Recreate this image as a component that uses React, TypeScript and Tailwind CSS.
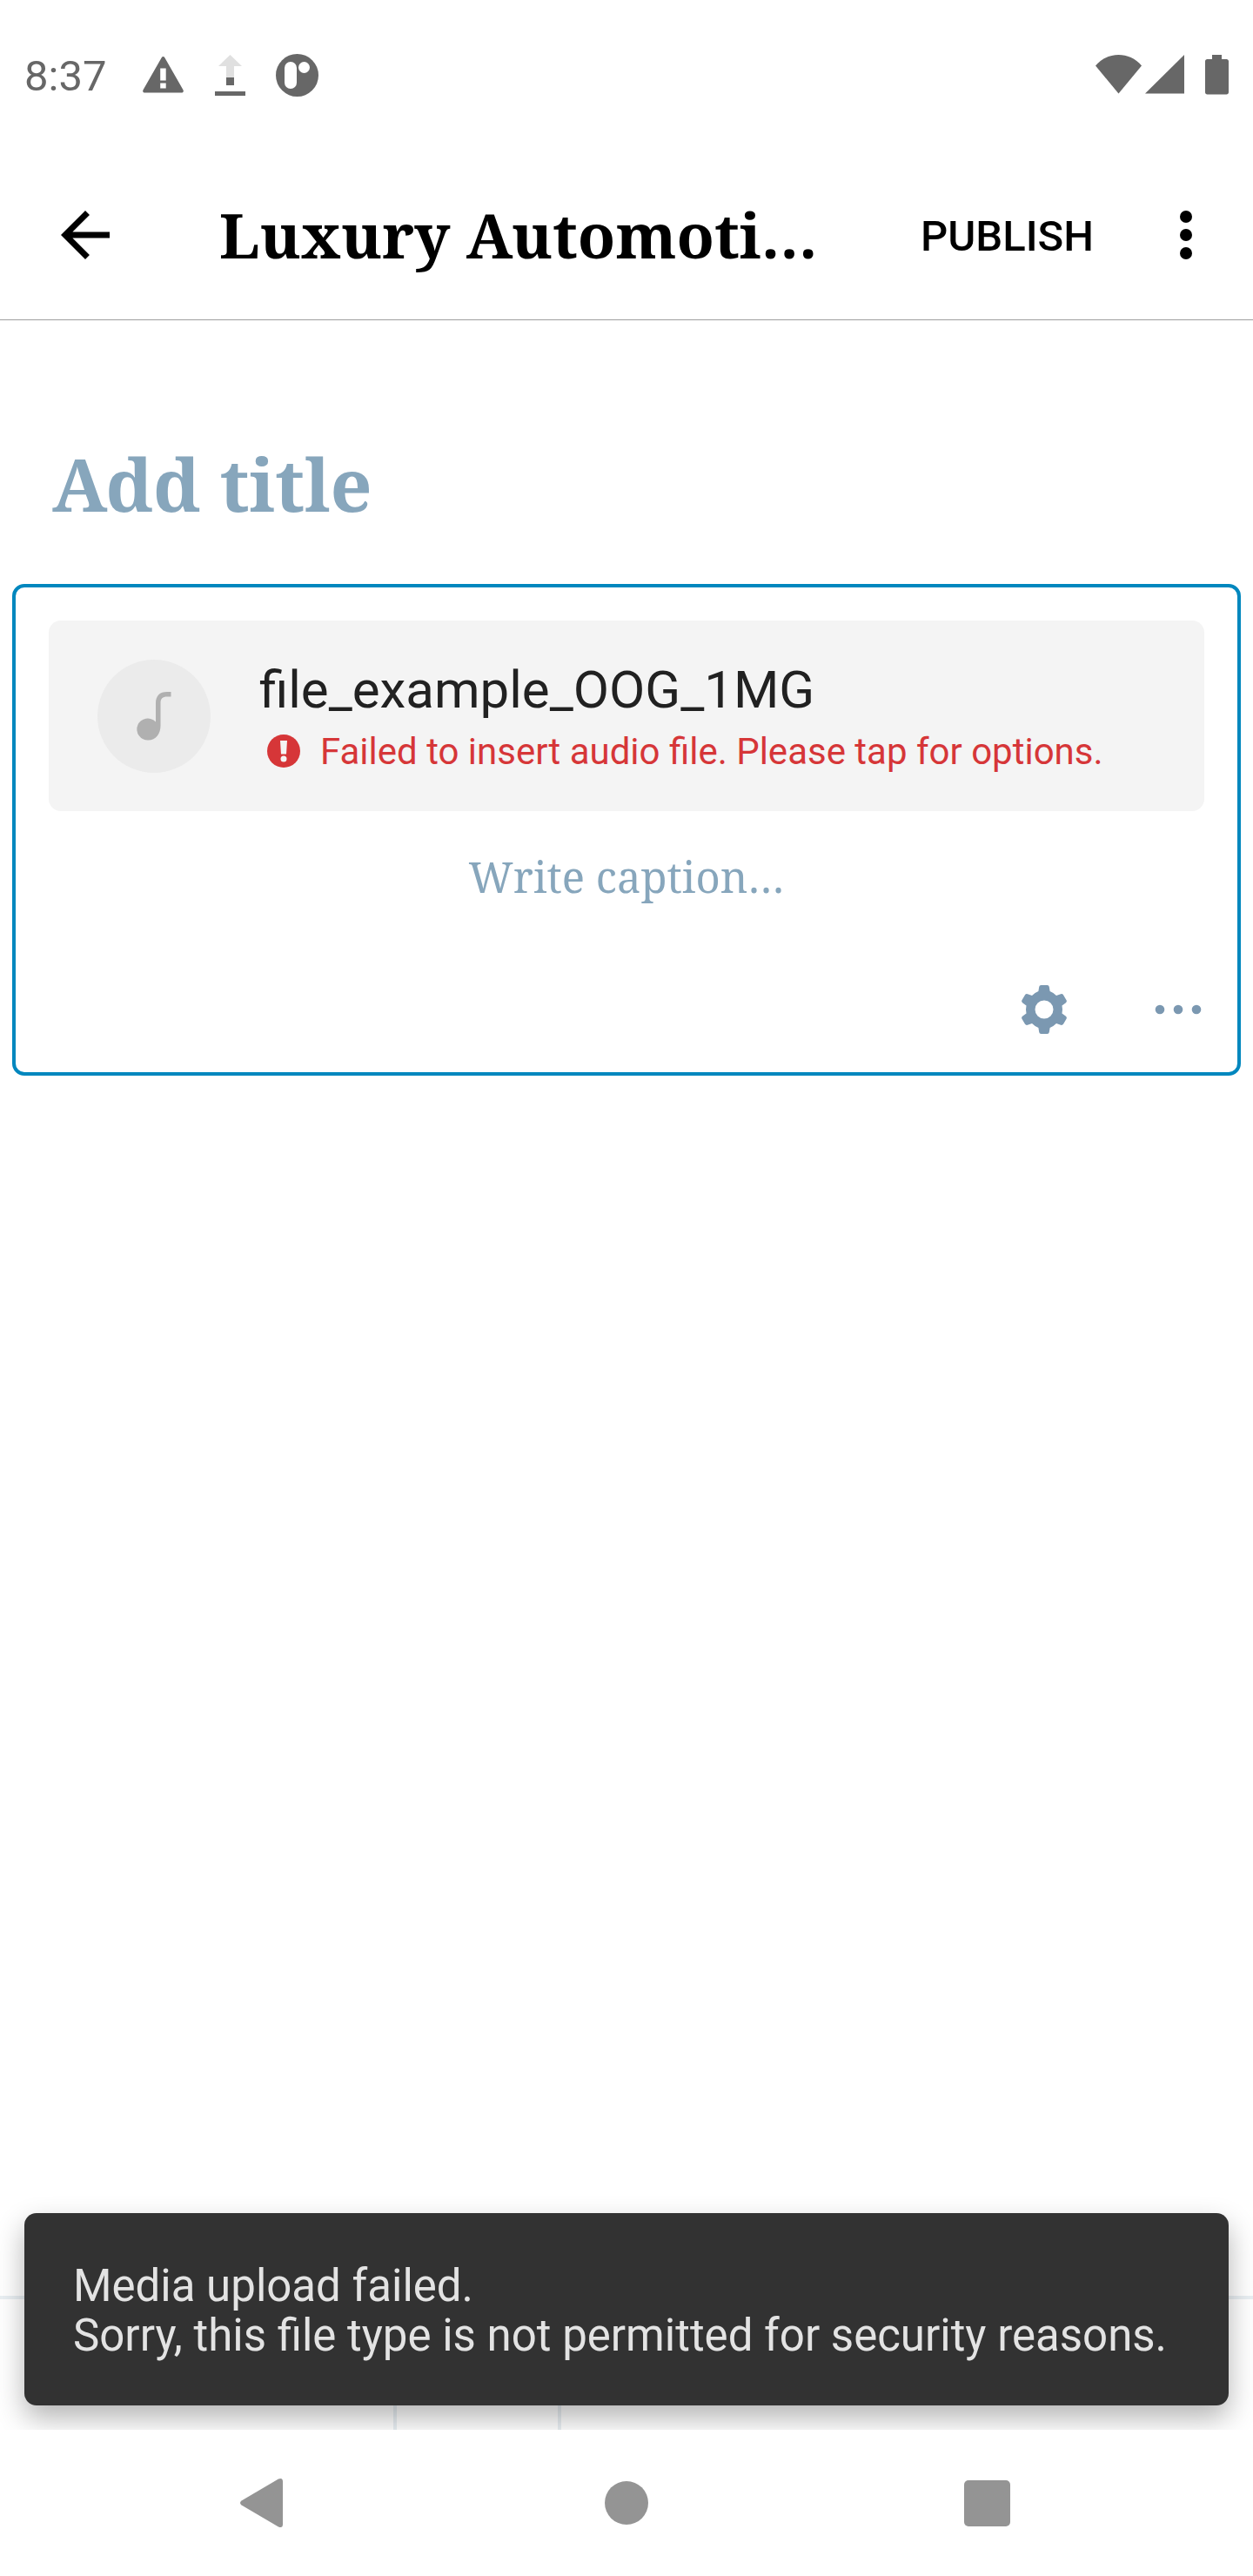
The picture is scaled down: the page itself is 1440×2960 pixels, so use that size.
import React from "react";

const serif = "font-['Noto_Serif','DejaVu_Serif_Condensed','DejaVu_Serif',serif]";

function StatusBar() {
  return (
    <div className="flex h-[172px] shrink-0 items-center justify-between px-7 text-[#676767]">
      <div className="flex items-center">
        <span className="pt-1 text-[49px] leading-[58px]">8:37</span>
        <svg className="ml-[41px] h-[49px] w-[49px]" viewBox="0 0 49 49" fill="currentColor" aria-hidden="true">
          <path
            fillRule="evenodd"
            d="M22.700 4.200c.8-1.500 2.800-1.500 3.600 0L47.600 41.500c.6 1.500 0 3-1.500 3H2.900c-1.500 0-2.100-1.500-1.500-3ZM21.200 16.500v14h6.500v-14ZM21.200 33.500v6h6.500v-6Z"
          />
        </svg>
        <svg className="ml-[35px] h-[49px] w-[35px]" viewBox="0 0 35 49" fill="currentColor" aria-hidden="true">
          <path d="M17.500 1 31 14h-9v13h-9V14H4Z" fill="#e0e0e0" />
          <path d="M13 27h9v9h-9ZM0 43h35v5H0Z" />
        </svg>
        <svg className="ml-[35px] h-[49px] w-[49px]" viewBox="0 0 49 49" aria-hidden="true">
          <circle cx="24.500" cy="24.500" r="24.500" fill="currentColor" />
          <rect x="10" y="9" width="14" height="31" rx="7" fill="#fff" />
          <circle cx="32.500" cy="15.500" r="6.500" fill="#fff" />
        </svg>
      </div>
      <div className="flex items-center">
        <svg className="h-[46px] w-[53px]" viewBox="0 0 53 46" fill="currentColor" aria-hidden="true">
          <path d="M26.500 44.500 0 12.500C7 4 17 0 26.500 0S46 4 53 12.500Z" />
        </svg>
        <svg className="ml-1 h-[46px] w-[45px]" viewBox="0 0 45 46" fill="currentColor" aria-hidden="true">
          <path d="M45 0v44.500H0Z" />
        </svg>
        <svg className="ml-6 h-[46px] w-[27px]" viewBox="0 0 27 46" fill="currentColor" aria-hidden="true">
          <path d="M8 0h11v5h5.500c1.500 0 2.500 1 2.500 2.500v35.500c0 1.500-1 2.500-2.500 2.500h-22C1 45.500 0 44.500 0 43V7.500C0 6 1 5 2.500 5H8Z" />
        </svg>
      </div>
    </div>
  );
}

function AppBar() {
  return (
    <header className="flex h-[196px] shrink-0 items-center border-b border-[#9e9e9e] pl-14 pr-[35px] text-black">
      <button type="button" aria-label="Back" className="h-[84px] w-[84px] shrink-0">
        <svg className="h-full w-full" viewBox="0 0 24 24" fill="currentColor" aria-hidden="true">
          <path d="M20 11H7.830l5.590-5.590L12 4l-8 8 8 8 1.410-1.410L7.830 13H20v-2z" />
        </svg>
      </button>
      <h1 className={`ml-28 min-w-0 flex-1 whitespace-nowrap text-[71px] font-bold leading-[96px] ${serif}`}>
        Luxury Automoti…
      </h1>
      <button type="button" className="shrink-0 pt-1 text-[49px] font-medium leading-[58px]">
        PUBLISH
      </button>
      <button type="button" aria-label="More options" className="ml-16 h-[84px] w-[84px] shrink-0">
        <svg className="h-full w-full" viewBox="0 0 24 24" fill="currentColor" aria-hidden="true">
          <circle cx="12" cy="6" r="2" />
          <circle cx="12" cy="12" r="2" />
          <circle cx="12" cy="18" r="2" />
        </svg>
      </button>
    </header>
  );
}

function AudioBlock() {
  return (
    <section className="mx-3.5 flex flex-col rounded-[14px] border-4 border-[#0087be] px-[38px] pt-[38px] pb-[30px]">
      <button type="button" className="flex h-[219px] items-center rounded-[14px] bg-[#f4f4f4] px-14 text-left">
        <span className="flex h-[130px] w-[130px] shrink-0 items-center justify-center rounded-full bg-[#ebebeb]">
          <svg className="h-[56px] w-[40px]" viewBox="0 0 40 56" fill="#b0b0b0" aria-hidden="true">
            <path d="M39.500 0v5.500H35c-5 0-7.500 2.500-7.500 7V39c0 9-5.500 16.500-14 16.500A12.500 12.500 0 1 1 22 34.500V13C22 4.500 26.500 0 35 0Z" />
          </svg>
        </span>
        <span className="ml-14 flex min-w-0 flex-1 flex-col pt-1">
          <span className="text-[60px] leading-[78px] text-[#212121]">file_example_OOG_1MG</span>
          <span className="flex items-center gap-[22px] pl-2 text-[42px] leading-[64px] text-[#d63638]">
            <svg className="h-[40px] w-[40px] shrink-0" viewBox="0 0 40 40" aria-hidden="true">
              <circle cx="20" cy="19" r="19" fill="currentColor" />
              <path d="M16 7h8l-1 15.500h-6Z" fill="#f4f4f4" />
              <circle cx="20" cy="28" r="3.500" fill="#f4f4f4" />
            </svg>
            <span>Failed to insert audio file. Please tap for options.</span>
          </span>
        </span>
      </button>
      <input
        type="text"
        aria-label="Audio caption"
        placeholder="Write caption…"
        className={`mt-[41px] h-[68px] w-full bg-transparent text-center text-[49px] leading-[68px] text-[#2e4453] outline-none placeholder:text-[#87a6bc] placeholder:opacity-100 ${serif}`}
      />
      <div className="mt-[77px] flex justify-end gap-[70px] text-[#7b98b1]">
        <button type="button" aria-label="Block settings" className="h-[84px] w-[84px]">
          <svg className="h-full w-full" viewBox="0 0 84 84" fill="currentColor" aria-hidden="true">
            <path
              fillRule="evenodd"
              d="M38.500 14H45.500Q47.500 14 47.800 16L48.600 21Q52.500 22.500 56 26L61 24.200Q63 23.600 64 25.200L67.700 31.600Q68.400 33 67 34.200L62.500 37.500Q63.500 42 62.500 46.500L67 49.800Q68.400 51 67.700 52.400L64 58.800Q63 60.400 61 59.800L56 58Q52.500 61.500 48.600 63L47.800 68Q47.500 70 45.500 70H38.500Q36.500 70 36.200 68L35.400 63Q31.500 61.500 28 58L23 59.800Q21 60.400 20 58.800L16.300 52.400Q15.600 51 17 49.800L21.500 46.500Q20.500 42 21.500 37.500L17 34.200Q15.600 33 16.300 31.600L20 25.200Q21 23.600 23 24.200L28 26Q31.500 22.500 35.400 21L36.200 16Q36.500 14 38.500 14ZM42 31.500a10.500 10.500 0 1 0 0 21 10.500 10.500 0 0 0 0-21Z"
            />
          </svg>
        </button>
        <button type="button" aria-label="Block actions" className="-mr-3 h-[84px] w-[84px]">
          <svg className="h-full w-full" viewBox="0 0 84 84" fill="currentColor" aria-hidden="true">
            <circle cx="21" cy="42" r="5.300" />
            <circle cx="42" cy="42" r="5.300" />
            <circle cx="63" cy="42" r="5.300" />
          </svg>
        </button>
      </div>
    </section>
  );
}

function NavigationBar() {
  return (
    <nav className="relative z-10 flex h-[168px] shrink-0 items-center justify-center gap-[330px] bg-white text-[#949494]">
      <button type="button" aria-label="Back" className="h-[84px] w-[84px]">
        <svg className="h-full w-full" viewBox="0 0 84 84" fill="currentColor" aria-hidden="true">
          <path d="M13.500 39.500 56 14.500q5-2 5 3v49q0 5-5 3L13.500 44.500q-3-2.500 0-5Z" />
        </svg>
      </button>
      <button type="button" aria-label="Home" className="h-[84px] w-[84px]">
        <svg className="h-full w-full" viewBox="0 0 84 84" fill="currentColor" aria-hidden="true">
          <circle cx="42" cy="42" r="25" />
        </svg>
      </button>
      <button type="button" aria-label="Recent apps" className="h-[84px] w-[84px]">
        <svg className="h-full w-full" viewBox="0 0 84 84" fill="currentColor" aria-hidden="true">
          <rect x="16" y="16" width="53" height="53" rx="5" />
        </svg>
      </button>
    </nav>
  );
}

export default function App() {
  return (
    <div className="flex min-h-screen flex-col bg-white font-[Roboto,sans-serif]">
      <StatusBar />
      <AppBar />
      <main className="flex flex-1 flex-col">
        <input
          type="text"
          aria-label="Post title"
          placeholder="Add title"
          className={`mt-[130px] mb-[58px] h-[115px] w-full bg-transparent px-[60px] text-[84px] font-bold leading-[115px] text-[#2e4453] outline-none placeholder:text-[#87a6bc] placeholder:opacity-100 ${serif}`}
        />
        <AudioBlock />
      </main>
      <div className="relative flex h-[154px] shrink-0 border-t-4 border-[#e9eff3]">
        <div className="w-[452px]" />
        <div className="w-[193px] border-x-4 border-[#e9eff3]" />
        <div
          role="alert"
          className="absolute inset-x-7 bottom-7 rounded-[14px] bg-[#323232] px-14 pt-[55px] pb-[52px] text-[51px] leading-[57px] text-[#e3e3e3] shadow-[0_14px_32px_rgba(0,0,0,0.3)]"
        >
          <p>Media upload failed.</p>
          <p>Sorry, this file type is not permitted for security reasons.</p>
        </div>
      </div>
      <NavigationBar />
    </div>
  );
}
